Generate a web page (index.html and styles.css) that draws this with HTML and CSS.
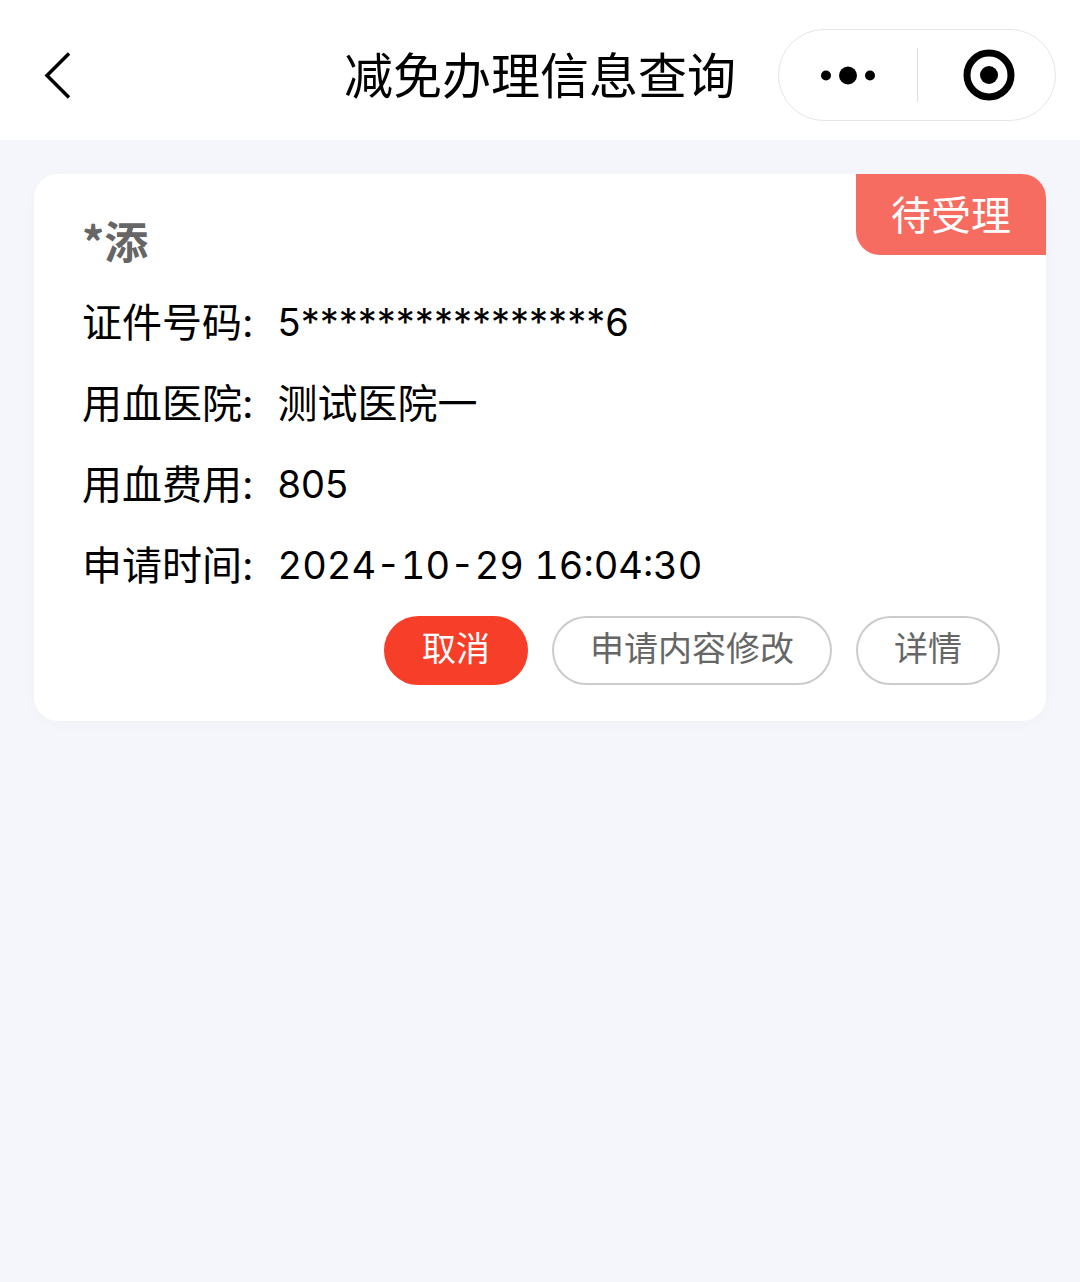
FILE: index.html
```html
<!DOCTYPE html>
<html lang="zh-CN">
<head>
    <meta charset="UTF-8">
    <meta name="viewport" content="width=device-width, initial-scale=1.0">
    <title>减免办理信息查询</title>
    <link rel="stylesheet" href="styles.css">
</head>
<body>
    <header class="navbar">
        <button class="back" type="button" aria-label="返回">
            <svg width="28" height="48" viewBox="0 0 28 48" fill="none" stroke="#000" stroke-width="3.5">
                <path d="M25 2.5 L3 24.5 L25 46.5"/>
            </svg>
        </button>
        <h1 class="title">减免办理信息查询</h1>
        <div class="capsule">
            <button class="capsule-btn" type="button" aria-label="更多">
                <svg width="56" height="20" viewBox="0 0 56 20">
                    <circle cx="6" cy="10.5" r="5"/>
                    <circle cx="28" cy="10.5" r="9"/>
                    <circle cx="50" cy="10.5" r="5"/>
                </svg>
            </button>
            <button class="capsule-btn capsule-close" type="button" aria-label="关闭">
                <svg width="52" height="52" viewBox="0 0 52 52">
                    <circle cx="26" cy="26" r="22" fill="none" stroke="#000" stroke-width="7"/>
                    <circle cx="26" cy="26" r="9"/>
                </svg>
            </button>
        </div>
    </header>

    <main class="content">
        <section class="card">
            <span class="status">待受理</span>
            <h2 class="name">*添</h2>
            <dl class="info">
                <dt>证件号码:</dt>
                <dd class="number">5****************6</dd>
                <dt>用血医院:</dt>
                <dd>测试医院一</dd>
                <dt>用血费用:</dt>
                <dd class="number">805</dd>
                <dt>申请时间:</dt>
                <dd class="number time">2024-10-29 16:04:30</dd>
            </dl>
            <div class="actions">
                <button class="btn btn-cancel" type="button">取消</button>
                <button class="btn" type="button">申请内容修改</button>
                <button class="btn" type="button">详情</button>
            </div>
        </section>
    </main>
</body>
</html>
```
FILE: styles.css
```css
* {
    box-sizing: border-box;
}
body {
    margin: 0;
    background-color: #f4f6fb;
    color: #000;
    font-family: Inter, "Noto Sans CJK SC", sans-serif;
}
button {
    padding: 0;
    border: none;
    background: none;
    font-family: inherit;
}
svg {
    display: block;
}

/* Top bar */
.navbar {
    display: grid;
    grid-template-columns: 1fr auto 1fr;
    align-items: center;
    height: 140px;
    padding: 10px 24px 0;
    background-color: #fff;
}
.back {
    justify-self: start;
    padding: 0 20px;
}
.title {
    margin: 0;
    padding-top: 4px;
    font-size: 49px;
    font-weight: 400;
    line-height: 60px;
}
.capsule {
    display: flex;
    justify-self: end;
    align-items: center;
    width: 278px;
    height: 92px;
    border: 1px solid #e6e6e6;
    border-radius: 46px;
}
.capsule-btn {
    display: flex;
    width: 50%;
    align-items: center;
    justify-content: center;
    height: 54px;
}
.capsule-close {
    padding-left: 4px;
    border-left: 1px solid #ddd;
}

/* Record card */
.content {
    padding: 34px;
}
.card {
    position: relative;
    padding: 34px 46px 36px 48px;
    border-radius: 24px;
    background-color: #fff;
    box-shadow: 0 4px 16px rgba(0, 0, 0, 0.02);
}
.status {
    position: absolute;
    top: 0;
    right: 0;
    padding: 2px 35px 0;
    border-radius: 0 24px 0 24px;
    background-color: #f76c60;
    color: #fff;
    font-size: 40px;
    line-height: 79px;
}
.name {
    margin: 0;
    color: #666;
    font-family: "Noto Sans CJK SC", sans-serif;
    font-size: 44px;
    font-weight: 700;
    line-height: 64px;
}
.info {
    display: grid;
    grid-template-columns: auto 1fr;
    column-gap: 24px;
    margin: 10px 0;
    font-size: 40px;
    line-height: 81px;
}
.info dd {
    margin: 0;
}
.info .number {
    font-size: 38px;
}
.info .time {
    font-variant-numeric: tabular-nums;
}
.actions {
    display: flex;
    justify-content: flex-end;
    gap: 24px;
}
.btn {
    height: 69px;
    padding: 0 36px 8px;
    border: 2px solid #ccc;
    border-radius: 35px;
    color: #666;
    font-size: 34px;
}
.btn-cancel {
    border-color: #f73e29;
    background-color: #f73e29;
    color: #fff;
}
```
